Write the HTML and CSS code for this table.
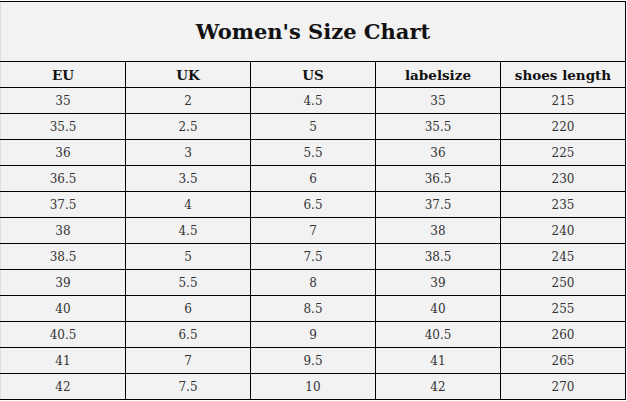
FILE: index.html
```html
<!DOCTYPE html>
<html>
<head>
<meta charset="utf-8">
<link rel="stylesheet" href="styles.css">
</head>
<body>
<table class="chart">
  <thead>
    <tr><th class="title" colspan="5">Women's Size Chart</th></tr>
    <tr class="head"><th>EU</th><th>UK</th><th>US</th><th>labelsize</th><th>shoes length</th></tr>
  </thead>
  <tbody>
    <tr><td>35</td><td>2</td><td>4.5</td><td>35</td><td>215</td></tr>
    <tr><td>35.5</td><td>2.5</td><td>5</td><td>35.5</td><td>220</td></tr>
    <tr><td>36</td><td>3</td><td>5.5</td><td>36</td><td>225</td></tr>
    <tr><td>36.5</td><td>3.5</td><td>6</td><td>36.5</td><td>230</td></tr>
    <tr><td>37.5</td><td>4</td><td>6.5</td><td>37.5</td><td>235</td></tr>
    <tr><td>38</td><td>4.5</td><td>7</td><td>38</td><td>240</td></tr>
    <tr><td>38.5</td><td>5</td><td>7.5</td><td>38.5</td><td>245</td></tr>
    <tr><td>39</td><td>5.5</td><td>8</td><td>39</td><td>250</td></tr>
    <tr><td>40</td><td>6</td><td>8.5</td><td>40</td><td>255</td></tr>
    <tr><td>40.5</td><td>6.5</td><td>9</td><td>40.5</td><td>260</td></tr>
    <tr><td>41</td><td>7</td><td>9.5</td><td>41</td><td>265</td></tr>
    <tr><td>42</td><td>7.5</td><td>10</td><td>42</td><td>270</td></tr>
  </tbody>
</table>
</body>
</html>
```
FILE: styles.css
```css
html, body {
  margin: 0;
  padding: 0;
  background: #ffffff;
}
body {
  padding-top: 1px;
}
.chart {
  border-collapse: collapse;
  width: 626px;
  table-layout: fixed;
  background: #f2f2f2;
  font-family: "DejaVu Serif", "Liberation Serif", serif;
  border-left: 1px solid #d9dde6;
}
.chart th, .chart td {
  border: 1px solid #000;
  text-align: center;
  padding: 0;
}
.chart .title {
  height: 59px;
  font-size: 21px;
  font-weight: bold;
  color: #111;
  border-left-color: #d9dde6;
}
.chart .head th {
  height: 25px;
  font-size: 13.5px;
  font-weight: bold;
  color: #111;
}
.chart td {
  height: 25px;
  font-size: 12px;
  color: #333;
  font-variant-numeric: oldstyle-nums;
}
.chart tr > :first-child {
  border-left-color: #d9dde6;
}
```
